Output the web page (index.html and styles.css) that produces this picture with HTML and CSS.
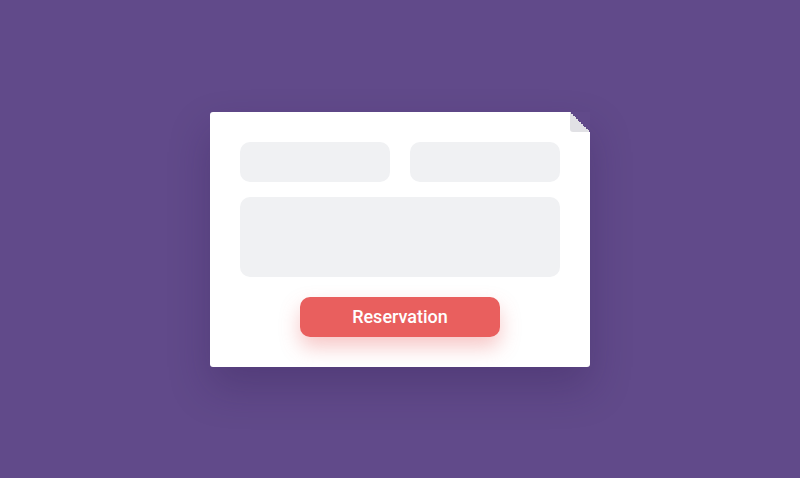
FILE: index.html
```html
<!DOCTYPE html>
<html lang="en">
  <head>
    <meta charset="UTF-8">
    <meta name="viewport" content="width=device-width, initial-scale=1.0">
    <title>Reservation</title>
    <link rel="stylesheet" href="styles.css">
  </head>
  <body>
    <div class="card">
      <div class="row">
        <div class="field"></div>
        <div class="field"></div>
      </div>
      <div class="field field-large"></div>
      <button class="btn">Reservation</button>
    </div>
  </body>
</html>
```

FILE: styles.css
```css
body {
  margin: 0;
  font-family: Roboto, "Liberation Sans", Arial, sans-serif;
  background-color: #614a8a;
  height: 100vh;
  display: flex;
  align-items: center;
  justify-content: center;
}
.card {
  position: relative;
  box-sizing: border-box;
  width: 380px;
  height: 255px;
  margin-top: 1px;
  padding: 30px;
  background: #fff;
  border-radius: 3px;
  box-shadow: 0 20px 40px rgba(40, 20, 70, 0.25);
  display: flex;
  flex-direction: column;
  gap: 15px;
}
/* folded corner */
.card::before {
  content: "";
  position: absolute;
  top: 0;
  right: 0;
  width: 20px;
  height: 20px;
  background: linear-gradient(to bottom left, #614a8a 50%, #e1e1e5 50%);
  border-bottom-left-radius: 3px;
}
.row {
  display: flex;
  gap: 20px;
}
.field {
  flex: 1;
  height: 40px;
  background: #f0f1f3;
  border-radius: 10px;
}
.field-large {
  flex: none;
  height: 80px;
}
.btn {
  align-self: center;
  width: 200px;
  height: 40px;
  margin-top: 5px;
  padding: 0 0 2px;
  border: none;
  border-radius: 10px;
  background: #e95f5e;
  color: #fff;
  font-family: inherit;
  font-size: 18px;
  font-weight: 500;
  box-shadow: 0 10px 20px rgba(233, 95, 94, 0.35);
  cursor: pointer;
}
```
